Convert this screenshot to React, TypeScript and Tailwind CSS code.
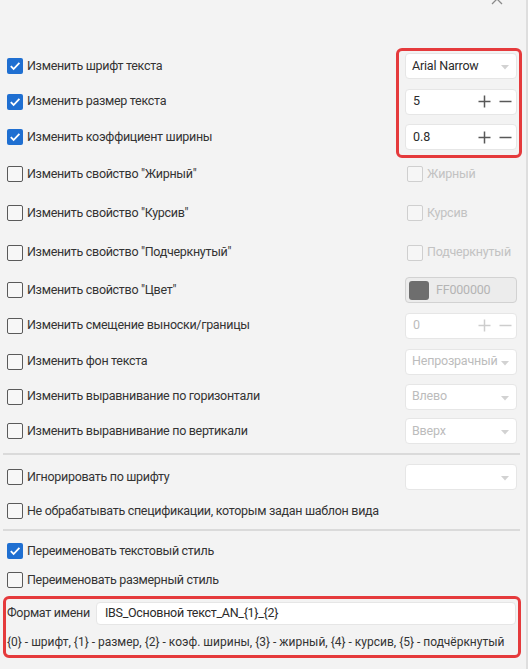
import React from "react";

const FONT = { fontFamily: 'Roboto, "Liberation Sans", sans-serif' };

function Check({ checked, disabled }: { checked?: boolean; disabled?: boolean }) {
  if (checked) {
    return (
      <div className="w-4 h-4 shrink-0 rounded-[2px] bg-[#1f6fd1] flex items-center justify-center">
        <svg width="12" height="12" viewBox="0 0 12 12">
          <path d="M1.8 6.2 L4.6 9 L10.4 2.8" fill="none" stroke="#fff" strokeWidth="1.8" />
        </svg>
      </div>
    );
  }
  return (
    <div
      className={
        disabled
          ? "w-4 h-4 shrink-0 rounded-[2px] border border-[#cfcfcf] bg-[#f6f6f6]"
          : "w-4 h-4 shrink-0 rounded-[2px] border border-[#5a5a5a] bg-[#f7f7f7]"
      }
    />
  );
}

function Arrow() {
  return (
    <svg width="8" height="5" viewBox="0 0 8 5" className="absolute right-[7px] top-[11px]">
      <path d="M0 0 L8 0 L4 4.5 Z" fill="#d2d2d2" />
    </svg>
  );
}

function Select({ value, disabled }: { value: string; disabled?: boolean }) {
  return (
    <div className="relative w-[112px] h-[26px] rounded-[4px] bg-white border border-[#e6e6e6] flex items-center px-[6px]">
      <span
        className={
          disabled
            ? "text-[12.5px] tracking-[-0.2px] text-[#bcbcbc]"
            : "text-[12.5px] tracking-[-0.2px] text-[#2b2b2b]"
        }
      >
        {value}
      </span>
      <Arrow />
    </div>
  );
}

function Spin({ value, disabled }: { value: string; disabled?: boolean }) {
  const c = disabled ? "#cdcdcd" : "#585858";
  return (
    <div className="w-[112px] h-[26px] rounded-[4px] bg-white border border-[#e6e6e6] flex items-center pl-[7px] pr-[4px]">
      <span className={disabled ? "flex-1 text-[12.5px] text-[#bcbcbc]" : "flex-1 text-[12.5px] text-[#2b2b2b]"}>
        {value}
      </span>
      <svg width="13" height="13" viewBox="0 0 13 13" className="mr-[8px]">
        <path d="M6.5 0.5 V12.5 M0.5 6.5 H12.5" stroke={c} strokeWidth="1.5" />
      </svg>
      <svg width="13" height="13" viewBox="0 0 13 13">
        <path d="M0.5 6.5 H12.5" stroke={c} strokeWidth="1.5" />
      </svg>
    </div>
  );
}

function Row({
  h,
  label,
  checked,
  children,
}: {
  h: string;
  label: string;
  checked?: boolean;
  children?: React.ReactNode;
}) {
  return (
    <div className={`${h} flex items-center pl-[7px] pr-[9px]`}>
      <Check checked={checked} />
      <span className="ml-[4px] flex-1 text-[12.5px] tracking-[-0.3px] text-[#333333] whitespace-nowrap">{label}</span>
      {children}
    </div>
  );
}

function DisabledToggle({ label }: { label: string }) {
  return (
    <div className="w-[112px] flex items-center pl-[2px]">
      <Check disabled />
      <span className="ml-[4px] text-[12.5px] tracking-[-0.2px] text-[#c2c2c2]">{label}</span>
    </div>
  );
}

export default function App() {
  return (
    <div className="relative w-[528px] h-[669px] bg-[#f3f3f3] border-r-2 border-[#dedede] overflow-hidden" style={FONT}>
      {/* close button, scrolled partly out of view */}
      <svg width="12" height="12" viewBox="0 0 12 12" className="absolute left-[491px] top-[-7px]">
        <path d="M1 1 L11 11 M11 1 L1 11" stroke="#8a8a8a" strokeWidth="1.3" />
      </svg>

      <div className="pt-[48px] flex flex-col">
        <Row h="h-[36px]" label="Изменить шрифт текста" checked>
          <Select value="Arial Narrow" />
        </Row>
        <Row h="h-[35px]" label="Изменить размер текста" checked>
          <Spin value="5" />
        </Row>
        <Row h="h-[36px]" label="Изменить коэффициент ширины" checked>
          <Spin value="0.8" />
        </Row>
        <Row h="h-[38px]" label={'Изменить свойство "Жирный"'}>
          <DisabledToggle label="Жирный" />
        </Row>
        <Row h="h-[40px]" label={'Изменить свойство "Курсив"'}>
          <DisabledToggle label="Курсив" />
        </Row>
        <Row h="h-[39px]" label={'Изменить свойство "Подчеркнутый"'}>
          <DisabledToggle label="Подчеркнутый" />
        </Row>
        <Row h="h-[36px]" label={'Изменить свойство "Цвет"'}>
          <div className="w-[112px] h-[26px] rounded-[4px] bg-[#ececec] border border-[#d2d2d2] flex items-center pl-[3px]">
            <div className="w-[20px] h-[19px] rounded-[3px] bg-[#6e6e6e]" />
            <span className="ml-[7px] text-[12.5px] tracking-[-0.2px] text-[#b4b4b4]">FF000000</span>
          </div>
        </Row>
        <Row h="h-[35px]" label="Изменить смещение выноски/границы">
          <Spin value="0" disabled />
        </Row>
        <Row h="h-[37px]" label="Изменить фон текста">
          <Select value="Непрозрачный" disabled />
        </Row>
        <Row h="h-[33px]" label="Изменить выравнивание по горизонтали">
          <Select value="Влево" disabled />
        </Row>
        <Row h="h-[36px]" label="Изменить выравнивание по вертикали">
          <Select value="Вверх" disabled />
        </Row>

        <div className="mt-[4px] mx-[3px] w-[517px] h-[2px] bg-[#dadada]" />

        <div className="mt-[4px]" />
        <Row h="h-[36px]" label="Игнорировать по шрифту">
          <Select value="" disabled />
        </Row>
        <Row h="h-[32px]" label="Не обрабатывать спецификации, которым задан шаблон вида" />

        <div className="mt-[2px] mx-[3px] w-[517px] h-[2px] bg-[#dadada]" />

        <Row h="h-[40px]" label="Переименовать текстовый стиль" checked />
        <Row h="h-[18px]" label="Переименовать размерный стиль" />

        <div className="mt-[7px] ml-[3px] w-[518px] h-[62px] rounded-[6px] border-[3px] border-[#e53a3c] pl-[1px] pr-[2px] pt-[3px] flex flex-col">
          <div className="flex items-center">
            <span className="w-[89px] text-[12.5px] tracking-[-0.3px] text-[#333333] whitespace-nowrap">Формат имени</span>
            <div className="flex-1 h-[23px] rounded-[4px] bg-white border border-[#e6e6e6] flex items-center pl-[8px]">
              <span className="text-[12.5px] tracking-[-0.3px] text-[#2b2b2b]">IBS_Основной текст_AN_{"{1}"}_{"{2}"}</span>
            </div>
          </div>
          <div className="mt-[8px] text-[12px] text-[#333333] whitespace-nowrap">
            {"{0} - шрифт, {1} - размер, {2} - коэф. ширины, {3} - жирный, {4} - курсив, {5} - подчёркнутый"}
          </div>
        </div>
      </div>

      {/* highlight around the font settings */}
      <div className="absolute left-[396px] top-[48px] w-[126px] h-[110px] rounded-[6px] border-[3px] border-[#e53a3c]" />
    </div>
  );
}
